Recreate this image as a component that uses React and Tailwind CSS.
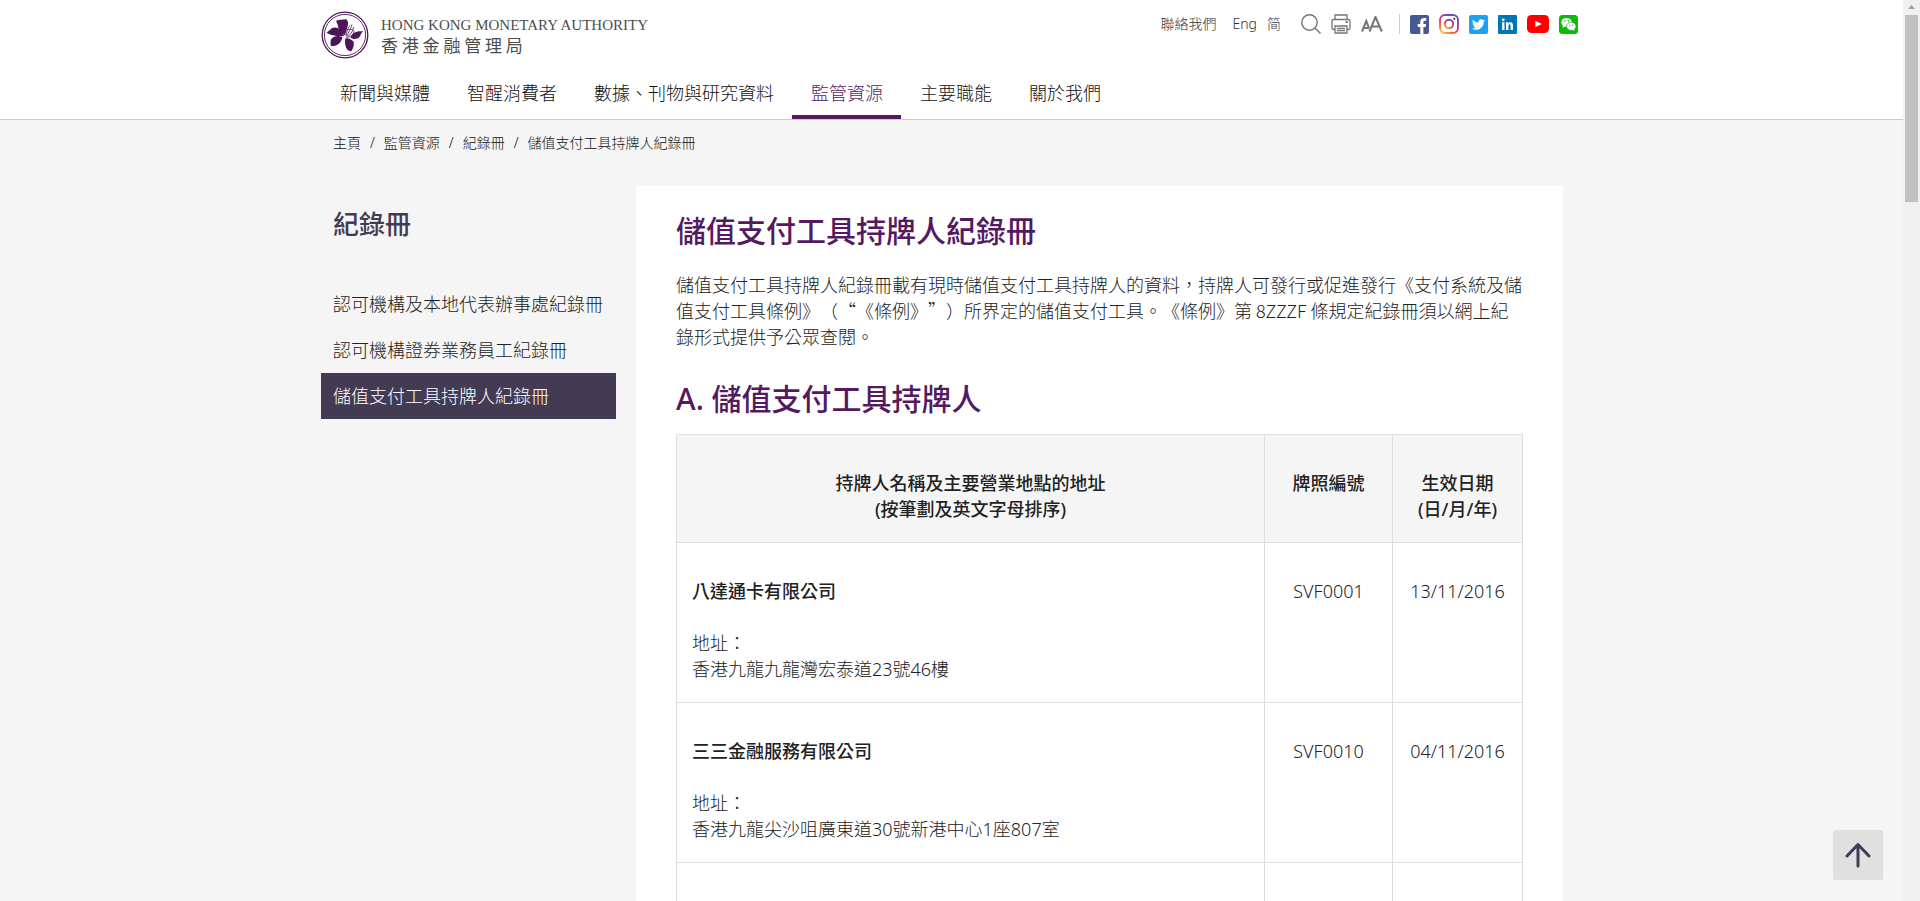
import { FaFacebookF, FaTwitter } from "react-icons/fa";

const navItems = [
  { text: '新聞與媒體', href: '#news' },
  { text: '智醒消費者', href: '#smart-consumers' },
  { text: '數據、刊物與研究資料', href: '#data' },
  { text: '監管資源', href: '#regulatory', active: true },
  { text: '主要職能', href: '#functions' },
  { text: '關於我們', href: '#about' },
];

const crumbs = [
  { text: '主頁', href: '#home' },
  { text: '監管資源', href: '#regulatory' },
  { text: '紀錄冊', href: '#registers' },
  { text: '儲值支付工具持牌人紀錄冊', href: '#svf' },
];

const sideItems = [
  { text: '認可機構及本地代表辦事處紀錄冊', href: '#ai' },
  { text: '認可機構證券業務員工紀錄冊', href: '#securities' },
  { text: '儲值支付工具持牌人紀錄冊', href: '#svf', active: true },
];

const licensees = [
  { name: '八達通卡有限公司', address: '香港九龍九龍灣宏泰道23號46樓', no: 'SVF0001', date: '13/11/2016' },
  { name: '三三金融服務有限公司', address: '香港九龍尖沙咀廣東道30號新港中心1座807室', no: 'SVF0010', date: '04/11/2016' },
];

const Emblem = () => (
  <svg viewBox="0 0 48 48" className="w-12 h-12" aria-hidden="true">
    <circle cx="24" cy="24" r="22.8" fill="#fff" stroke="#4f1559" strokeWidth="1.3" />
    <circle cx="24" cy="24" r="20.6" fill="none" stroke="#4f1559" strokeWidth="0.9" />
    <g fill="#4f1559">
      <path d="M15 9.800 L19 8.800 L25.500 8.300 L27 11 C27.500 15 25 19 24.200 24.500 C20.500 22 17 18.500 17 14.500 Z" />
      <path d="M5.500 21.500 C9 20 9.500 16.500 14 16.500 C18.500 17 21.500 20 23 25 C17.500 25.300 10 25 5.500 21.500 Z" />
      <path d="M21.500 26 C17 24 12 25 10 28.500 C9 31 9.800 33 9.800 35 C16 35.500 20.500 32 21.500 26 Z" />
      <path d="M24.300 27.500 C27 26.500 30 28 32.500 30.500 C33.500 34.500 32 38 30 40.500 L26.500 39 C24 35.500 23.500 31 24.300 27.500 Z" />
      <path d="M29.500 26.500 C31.500 22 34.500 19.500 42.300 20.300 C39.500 22 40 25 37.500 27 C34.500 28.500 31.500 28.300 29.500 26.500 Z" />
    </g>
    <g fill="none" stroke="#4f1559" strokeWidth="0.8">
      <path d="M25 25.500 C25.500 20 27 17 28.800 14.500 M26 25.500 C27.500 20 30 18 31 13.500 M27 25.500 C30.500 22 32 20 32.500 16" />
      <path d="M26 19 C29 17.500 32 18.500 33 20.500 C32.500 24 29.500 26 25.500 26.500" />
    </g>
  </svg>
);

const SearchIcon = () => (
  <svg viewBox="0 0 20 20" className="w-5 h-5" fill="none" stroke="#757575" strokeWidth="1.4">
    <circle cx="8.500" cy="8.500" r="7.700" />
    <path d="M14 14 L19.500 19.500" />
  </svg>
);

const PrintIcon = () => (
  <svg viewBox="0 0 20 20" className="w-5 h-5" fill="none" stroke="#757575" strokeWidth="1.3">
    <path d="M4 5.500 V1 H16 V5.500 M4 15.500 H2.500 Q1 15.500 1 14 V7 Q1 5.500 2.500 5.500 H17.500 Q19 5.500 19 7 V14 Q19 15.500 17.500 15.500 H16" />
    <path d="M4 12 H16 V19 H4 Z M6 14.500 H14 M6 16.700 H14 M14.500 8 H17 M15.750 7 V9" />
  </svg>
);

const FontSizeIcon = () => (
  <svg viewBox="0 0 22 16" className="w-[22px] h-4" fill="none" stroke="#757575" strokeWidth="2">
    <path d="M1 15.500 L5.300 5 L8 12 M2.500 12 H8" />
    <path d="M8.500 15.500 L14.500 1 L20.800 15.500 M10.500 10.500 H18.800" />
  </svg>
);

const FacebookIcon = () => (
  <span className="flex justify-end items-end w-[19px] h-[19px] pr-px rounded-xs overflow-hidden bg-[#475993] text-white">
    <FaFacebookF className="w-3 h-4" />
  </span>
);

const TwitterIcon = () => (
  <span className="flex justify-center items-center w-[19px] h-[19px] rounded-xs bg-[#1da1f2] text-white">
    <FaTwitter className="w-[13px] h-[13px]" />
  </span>
);

const InstagramIcon = () => (
  <svg viewBox="0 0 20 20" className="w-5 h-5">
    <defs>
      <linearGradient id="ig" x1="0.1" y1="1" x2="0.7" y2="0">
        <stop offset="0" stopColor="#fdc04b" />
        <stop offset="0.4" stopColor="#f0433f" />
        <stop offset="0.7" stopColor="#c32f9b" />
        <stop offset="1" stopColor="#5b4fd0" />
      </linearGradient>
    </defs>
    <g fill="none" stroke="url(#ig)" strokeWidth="1.9">
      <rect x="1" y="1" width="18" height="18" rx="5" />
      <circle cx="10" cy="10" r="4.200" />
    </g>
    <circle cx="15.200" cy="4.800" r="1.200" fill="#a137a8" />
  </svg>
);

const LinkedinIcon = () => (
  <svg viewBox="0 0 19 19" className="w-[19px] h-[19px]">
    <rect width="19" height="19" rx="1" fill="#0077b5" />
    <g fill="#fff">
      <circle cx="5.300" cy="4.800" r="1.400" />
      <rect x="4.100" y="7.200" width="2.400" height="7.800" />
      <path d="M8 7.200 H10.400 V8.400 C11.600 6.600 15 6.700 15 10.300 V15 H12.600 V11 C12.600 8.600 10.400 8.800 10.400 11 V15 H8 Z" />
    </g>
  </svg>
);

const YoutubeIcon = () => (
  <svg viewBox="0 0 22 18" className="w-[22px] h-[18px]">
    <rect width="22" height="18" rx="4.500" fill="#f00" />
    <path d="M8.300 5.800 L14.800 9 L8.300 12.200 Z" fill="#fff" />
  </svg>
);

const WechatIcon = () => (
  <svg viewBox="0 0 19 19" className="w-[19px] h-[19px]">
    <rect width="19" height="19" rx="3.500" fill="#09bb07" />
    <ellipse cx="7.600" cy="7.300" rx="5.300" ry="4.400" fill="#fff" />
    <path d="M4 10 L3.600 12.800 L6.500 11.200 Z" fill="#fff" />
    <ellipse cx="12.200" cy="11.300" rx="4.800" ry="4" fill="#fff" stroke="#09bb07" strokeWidth="0.7" />
    <path d="M13 14.500 L15.500 16 L15 13.500 Z" fill="#fff" />
    <g fill="#09bb07">
      <circle cx="5.900" cy="6" r="0.7" />
      <circle cx="9.300" cy="6" r="0.7" />
      <circle cx="10.700" cy="10.200" r="0.6" />
      <circle cx="13.700" cy="10.200" r="0.6" />
    </g>
  </svg>
);

const Header = () => (
  <header className="bg-white border-b border-[#ccc]">
    <div className="max-w-[1261px] mx-auto">
      <div className="flex justify-between items-start">
        <a href="#home" className="flex items-center gap-3 pt-[11px] text-[#4d4d4d]">
          <Emblem />
          <span className="flex flex-col">
            <span className="font-['Liberation_Serif',serif] text-[15px] leading-5 whitespace-nowrap">HONG KONG MONETARY AUTHORITY</span>
            <span className="font-['Noto_Sans_CJK_TC',sans-serif] text-[17px] leading-5">香 港 金 融 管 理 局</span>
          </span>
        </a>
        <div className="flex items-center pt-[14px] pr-1 text-sm leading-5 font-light text-[#333]">
          <a href="#contact" className="mr-4">聯絡我們</a>
          <a href="#en" className="mr-[10px]">Eng</a>
          <a href="#sc" className="mr-5">简</a>
          <div className="flex items-center gap-[10px]">
            <button type="button" aria-label="搜尋"><SearchIcon /></button>
            <button type="button" aria-label="列印"><PrintIcon /></button>
            <button type="button" aria-label="字型大小"><FontSizeIcon /></button>
          </div>
          <div className="w-px h-5 bg-[#ccc] ml-4 mr-[10px]" />
          <div className="flex items-center gap-[10px]">
            <a href="#facebook" aria-label="Facebook"><FacebookIcon /></a>
            <a href="#instagram" aria-label="Instagram"><InstagramIcon /></a>
            <a href="#twitter" aria-label="Twitter"><TwitterIcon /></a>
            <a href="#linkedin" aria-label="LinkedIn"><LinkedinIcon /></a>
            <a href="#youtube" aria-label="YouTube"><YoutubeIcon /></a>
            <a href="#wechat" aria-label="WeChat"><WechatIcon /></a>
          </div>
        </div>
      </div>
      <nav className="flex text-lg leading-[26px] font-light text-[#111]">
        {navItems.map((item) => (
          <a
            key={item.text}
            href={item.href}
            className={item.active
              ? 'pl-[19px] pr-[18px] pt-[21px] pb-[9px] border-b-4 border-[#541a61] text-[#541a61]'
              : 'pl-[19px] pr-[18px] pt-[21px] pb-[9px] border-b-4 border-transparent'}
          >
            {item.text}
          </a>
        ))}
      </nav>
    </div>
  </header>
);

const Sidebar = () => (
  <aside className="w-[295px] shrink-0">
    <h2 className="px-3 pt-5 text-[26px] leading-9 font-medium text-[#433b53]">紀錄冊</h2>
    <nav className="flex flex-col mt-[39px] text-lg leading-[26px] font-light">
      {sideItems.map((item) => (
        <a
          key={item.text}
          href={item.href}
          className={item.active ? 'px-3 py-[10px] bg-[#433b53] text-white' : 'px-3 py-[10px] text-[#222]'}
        >
          {item.text}
        </a>
      ))}
    </nav>
  </aside>
);

const RegisterTable = () => (
  <table className="w-full mt-[15px] border-collapse text-lg leading-[26px] text-[#222]">
    <thead>
      <tr className="bg-[#f5f5f5] align-top">
        <th className="border border-[#dedede] px-[15px] pt-[35px] pb-5 font-medium">
          持牌人名稱及主要營業地點的地址<br />(按筆劃及英文字母排序)
        </th>
        <th className="w-32 border border-[#dedede] pt-[35px] pb-5 font-medium">牌照編號</th>
        <th className="w-[130px] border border-[#dedede] pt-[35px] pb-5 font-medium">生效日期<br />(日/月/年)</th>
      </tr>
    </thead>
    <tbody>
      {licensees.map((item) => (
        <tr key={item.no} className="align-top font-light">
          <td className="border border-[#dedede] px-[15px] pt-[35px] pb-5">
            <p className="font-medium">{item.name}</p>
            <p className="mt-[26px]">地址：<br />{item.address}</p>
          </td>
          <td className="border border-[#dedede] pt-[35px] pb-5 text-center">{item.no}</td>
          <td className="border border-[#dedede] pt-[35px] pb-5 text-center">{item.date}</td>
        </tr>
      ))}
      <tr className="h-40">
        <td className="border border-[#dedede]" />
        <td className="border border-[#dedede]" />
        <td className="border border-[#dedede]" />
      </tr>
    </tbody>
  </table>
);

const App = () => {
  return (
    <div lang="zh-Hant" className="flex h-screen overflow-hidden bg-[#f5f5f5] font-['Noto_Sans','Noto_Sans_CJK_TC',sans-serif] [text-spacing-trim:space-all]">
      <div className="flex-1 min-w-0 overflow-hidden">
        <Header />
        <div className="max-w-[1261px] mx-auto">
          {/* Breadcrumb */}
          <div className="flex gap-[9px] px-3 pt-[13px] text-sm leading-5 font-light text-[#111]">
            {crumbs.map((item, index) => (
              <span key={item.text} className="flex gap-[9px]">
                {index > 0 && <span>/</span>}
                <a href={item.href}>{item.text}</a>
              </span>
            ))}
          </div>

          <div className="flex gap-5 mt-[33px] pr-[19px]">
            <Sidebar />
            <main className="flex-1 min-w-0 bg-white px-10 pt-[25px]">
              <h1 className="text-[30px] leading-10 font-medium text-[#541a61]">儲值支付工具持牌人紀錄冊</h1>
              {/* the CJK face comes first here so that the quotation marks are full width */}
              <p className="mt-5 font-['Noto_Sans_CJK_TC',sans-serif] text-lg leading-[26px] font-light text-[#222]">
                儲值支付工具持牌人紀錄冊載有現時儲值支付工具持牌人的資料，持牌人可發行或促進發行《支付系統及儲值支付工具條例》（“《條例》”）所界定的儲值支付工具。《條例》第 8ZZZF 條規定紀錄冊須以網上紀錄形式提供予公眾查閱。
              </p>
              <h2 className="mt-[30px] text-[30px] leading-10 font-medium text-[#541a61]">A. 儲值支付工具持牌人</h2>
              <RegisterTable />
            </main>
          </div>
        </div>
      </div>

      {/* Scroll track */}
      <div className="w-[17px] shrink-0 bg-[#f0f0f0] flex flex-col items-center">
        <svg viewBox="0 0 17 15" className="w-[17px] h-[15px]" aria-hidden="true">
          <path d="M5 9 L8.500 5 L12 9 Z" fill="#a0a0a0" />
        </svg>
        <div className="w-[13px] h-[187px] bg-[#c1c1c1]" />
      </div>

      {/* Back to top */}
      <button
        type="button"
        aria-label="返回頁首"
        className="fixed right-[37px] bottom-[21px] w-[50px] h-[50px] rounded-xs bg-[#e0e0e0] flex items-center justify-center"
      >
        <svg viewBox="0 0 26 26" className="w-[26px] h-[26px]" fill="none" stroke="#433b53" strokeWidth="3" strokeLinecap="round" strokeLinejoin="round">
          <path d="M13 24 V2.500 M2 14 L13 2.500 L24 14" />
        </svg>
      </button>
    </div>
  );
};

export default App;
